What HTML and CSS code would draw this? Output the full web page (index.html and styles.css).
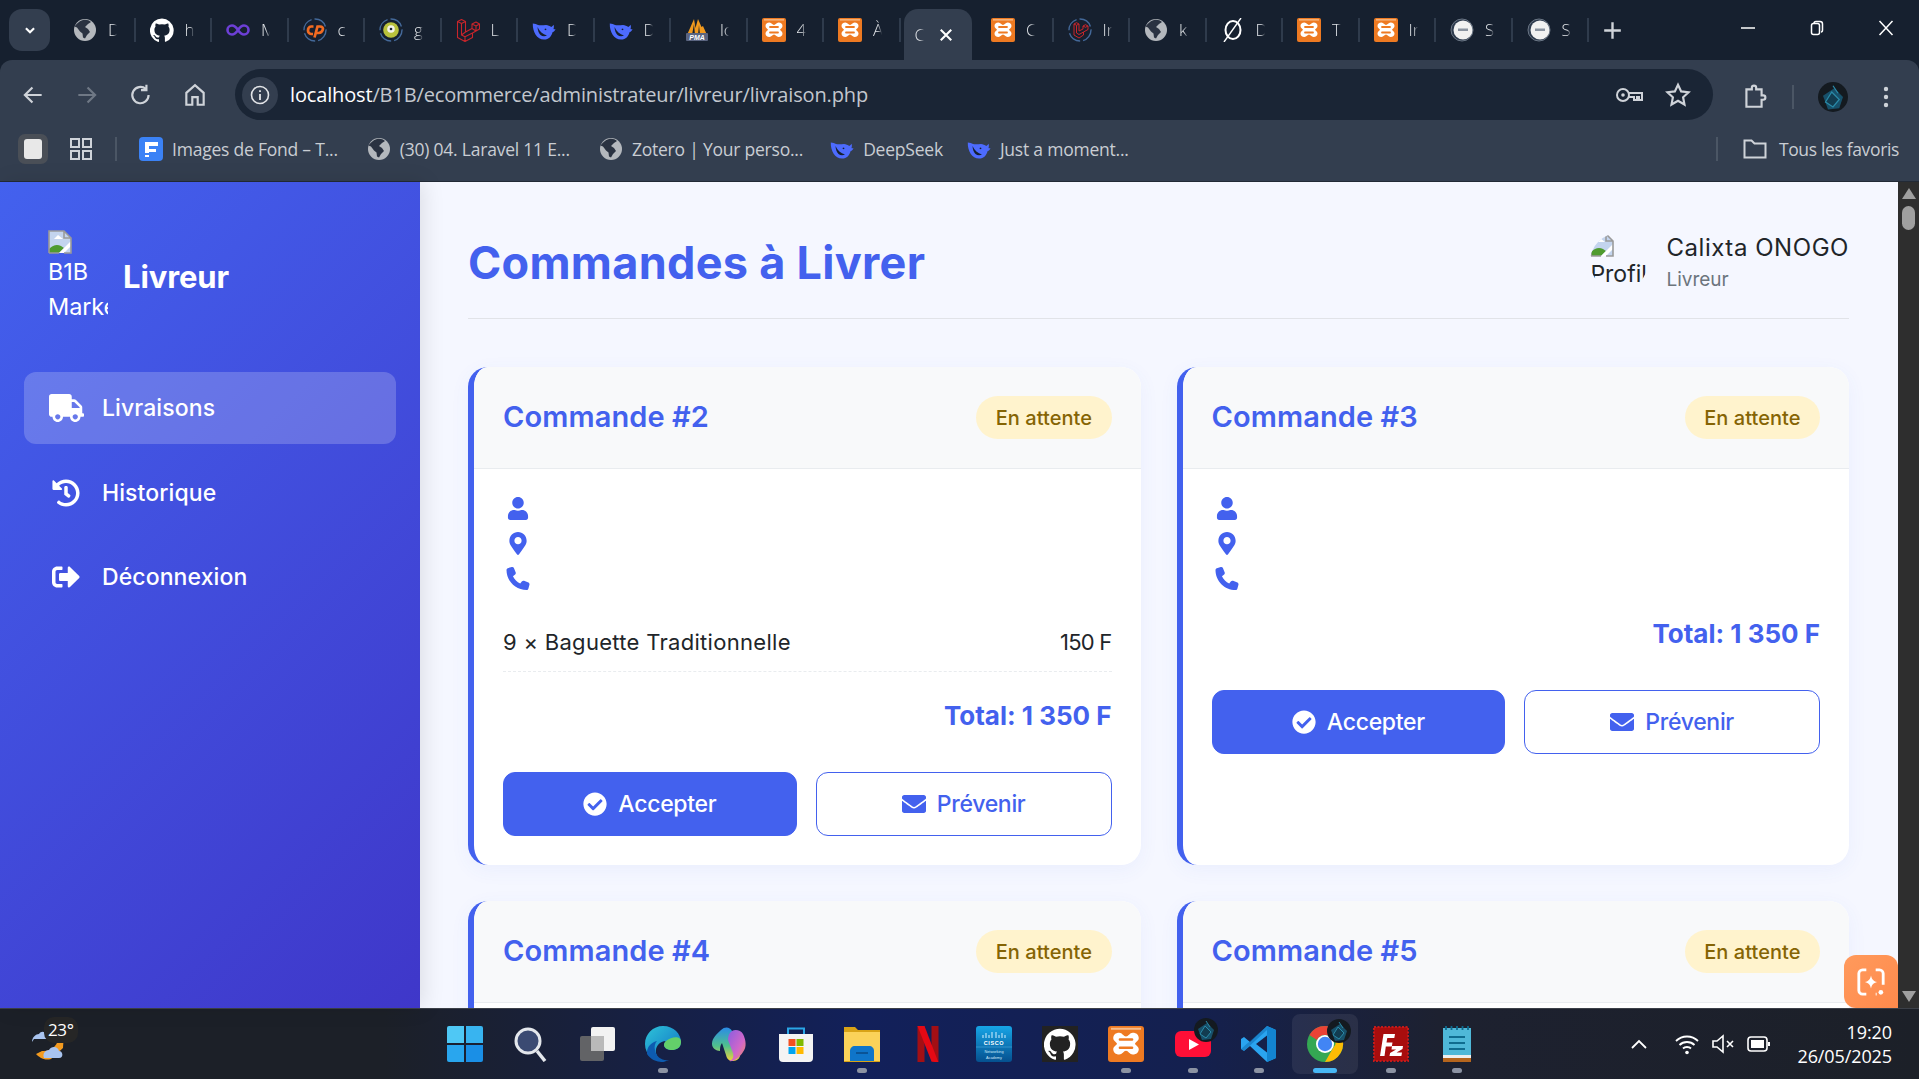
FILE: index.html
```html
<!DOCTYPE html>
<html lang="fr">
<head>
<meta charset="utf-8">
<title>Commandes à Livrer</title>
<link rel="stylesheet" href="styles.css">
</head>
<body>
<svg class="defs" aria-hidden="true">
  <defs>
    <linearGradient id="copA" x1="0" y1="0" x2="0" y2="1"><stop offset="0" stop-color="#2a8be8"/><stop offset=".55" stop-color="#4fc08d"/><stop offset="1" stop-color="#f2d23c"/></linearGradient>
    <linearGradient id="copB" x1="0" y1="0" x2="1" y2="1"><stop offset="0" stop-color="#8a5ee0"/><stop offset=".6" stop-color="#d167c9"/><stop offset="1" stop-color="#f0915a"/></linearGradient>
    <linearGradient id="ciscoG" x1="0" y1="0" x2="0" y2="1"><stop offset="0" stop-color="#17a5e6"/><stop offset="1" stop-color="#05508f"/></linearGradient>
    <linearGradient id="edgeG" x1="0" y1="0" x2="1" y2="1"><stop offset="0" stop-color="#2ec4d8"/><stop offset="1" stop-color="#0f6cc4"/></linearGradient>
  </defs>
  <symbol id="truck" viewBox="0 0 640 512"><path fill="currentColor" d="M624 352h-16V243.9c0-12.7-5.1-24.9-14.1-33.9L494 110.1c-9-9-21.2-14.1-33.9-14.1H416V48c0-26.5-21.5-48-48-48H48C21.5 0 0 21.5 0 48v320c0 26.5 21.5 48 48 48h16c0 53 43 96 96 96s96-43 96-96h128c0 53 43 96 96 96s96-43 96-96h48c8.8 0 16-7.2 16-16v-32c0-8.8-7.2-16-16-16zM160 464c-26.5 0-48-21.5-48-48s21.5-48 48-48 48 21.5 48 48-21.5 48-48 48zm320 0c-26.5 0-48-21.5-48-48s21.5-48 48-48 48 21.5 48 48-21.5 48-48 48zm80-208H416V144h44.1l99.9 99.9V256z"/></symbol>
  <symbol id="history" viewBox="0 0 512 512"><path fill="currentColor" d="M504 255.531c.253 136.64-111.18 248.372-247.82 248.468-59.015.042-113.223-20.53-155.822-54.911-11.077-8.94-11.905-25.541-1.839-35.607l11.267-11.267c8.609-8.609 22.353-9.551 31.891-1.984C173.062 425.135 212.781 440 256 440c101.705 0 184-82.311 184-184 0-101.705-82.311-184-184-184-48.814 0-93.149 18.969-126.068 49.932l50.754 50.754c10.08 10.08 2.941 27.314-11.313 27.314H24c-8.837 0-16-7.163-16-16V38.627c0-14.254 17.234-21.393 27.314-11.314l49.372 49.372C129.209 34.136 189.552 8 256 8c136.81 0 247.747 110.78 248 247.531zm-180.912 78.784l9.823-12.63c8.138-10.463 6.253-25.542-4.21-33.679L288 256.349V152c0-13.255-10.745-24-24-24h-16c-13.255 0-24 10.745-24 24v135.651l65.409 50.874c10.463 8.137 25.541 6.253 33.679-4.21z"/></symbol>
  <symbol id="signout" viewBox="0 0 512 512"><path fill="currentColor" d="M497 273L329 441c-15 15-41 4.5-41-17v-96H152c-13.3 0-24-10.7-24-24v-96c0-13.3 10.7-24 24-24h136V88c0-21.4 25.9-32 41-17l168 168c9.3 9.4 9.3 24.6 0 34zM192 436v-40c0-6.6-5.4-12-12-12H96c-17.7 0-32-14.3-32-32V160c0-17.7 14.3-32 32-32h84c6.6 0 12-5.4 12-12V76c0-6.6-5.4-12-12-12H96c-53 0-96 43-96 96v192c0 53 43 96 96 96h84c6.6 0 12-5.4 12-12z"/></symbol>
  <symbol id="user" viewBox="0 0 448 512"><path fill="currentColor" d="M224 256c70.7 0 128-57.3 128-128S294.7 0 224 0 96 57.3 96 128s57.3 128 128 128zm89.6 32h-16.7c-22.2 10.2-46.9 16-72.9 16s-50.6-5.8-72.9-16h-16.7C60.2 288 0 348.2 0 422.4V464c0 26.5 21.5 48 48 48h352c26.5 0 48-21.5 48-48v-41.6c0-74.2-60.2-134.4-134.4-134.4z"/></symbol>
  <symbol id="pin" viewBox="0 0 384 512"><path fill="currentColor" d="M172.268 501.67C26.97 291.031 0 269.413 0 192 0 85.961 85.961 0 192 0s192 85.961 192 192c0 77.413-26.97 99.031-172.268 309.67-9.535 13.774-29.93 13.773-39.464 0zM192 272c44.183 0 80-35.817 80-80s-35.817-80-80-80-80 35.817-80 80 35.817 80 80 80z"/></symbol>
  <symbol id="phone" viewBox="0 0 512 512"><path fill="currentColor" d="M164.9 24.6c-7.7-18.6-28-28.5-47.4-23.2l-88 24C12.1 30.2 0 46 0 64C0 311.4 200.6 512 448 512c18 0 33.8-12.1 38.6-29.5l24-88c5.3-19.4-4.6-39.7-23.2-47.4l-96-40c-16.3-6.8-35.2-2.1-46.3 11.6L304.7 368C234.3 334.7 177.3 277.7 144 207.3L193.3 167c13.7-11.2 18.4-30 11.6-46.3l-40-96z"/></symbol>
  <symbol id="check" viewBox="0 0 512 512"><path fill="currentColor" d="M504 256c0 136.967-111.033 248-248 248S8 392.967 8 256 119.033 8 256 8s248 111.033 248 248zM227.314 387.314l184-184c6.248-6.248 6.248-16.379 0-22.627l-22.627-22.627c-6.248-6.249-16.379-6.249-22.628 0L216 308.118l-70.059-70.059c-6.248-6.248-16.379-6.248-22.628 0l-22.627 22.627c-6.248 6.248-6.248 16.379 0 22.627l104 104c6.249 6.249 16.379 6.249 22.628.001z"/></symbol>
  <symbol id="envelope" viewBox="0 0 512 512"><path fill="currentColor" d="M502.3 190.8c3.9-3.1 9.7-.2 9.7 4.7V400c0 26.5-21.5 48-48 48H48c-26.5 0-48-21.5-48-48V195.6c0-5 5.7-7.8 9.7-4.7 22.4 17.4 52.1 39.5 154.1 113.6 21.1 15.4 56.7 47.8 92.2 47.6 35.7.3 72-32.8 92.3-47.6 102-74.1 131.6-96.3 154-113.7zM256 320c23.2.4 56.6-29.2 73.4-41.4 132.7-96.3 142.8-104.7 173.4-128.7 5.8-4.5 9.2-11.5 9.2-18.9v-19c0-26.5-21.5-48-48-48H48C21.5 64 0 85.5 0 112v19c0 7.4 3.4 14.3 9.2 18.9 30.6 23.9 40.7 32.4 173.4 128.7 16.8 12.2 50.2 41.8 73.4 41.4z"/></symbol>
  <symbol id="broken" viewBox="0 0 24 24"><path fill="#c3d4ee" d="M1 1h15l7 7v15H1z"/><path fill="#fff" d="M6 9l4-4 5 4z"/><path fill="#4f9b2f" d="M1 23v-4c4-4 8-5 12-3l3 2-5 5z"/><path fill="#fff" d="M11 23l12-12v5l-7 7z"/><path fill="none" stroke="#9a9a9a" stroke-width="1.6" d="M1 23V1h15l7 7v15H16M23 8h-7V1M1 23h10"/></symbol>
  <symbol id="globe" viewBox="0 0 24 24"><circle cx="12" cy="12" r="11" fill="#b4b8bd"/><path fill="#1b2433" d="M10 2c3-.5 6 0 8 2l-3 2-3 3 3 2 2 3-3 3-2 3.500-2-1-.5-4-2.500-2-3-4-2.500-1C3.500 6 6 3 10 2z" fill-opacity=".9"/></symbol>
  <symbol id="github" viewBox="0 0 24 24"><path fill="#fff" d="M12 .5a12 12 0 0 0-3.800 23.400c.6.1.8-.3.8-.6v-2.100c-3.300.7-4-1.600-4-1.600-.5-1.400-1.300-1.800-1.300-1.800-1.100-.7.1-.7.1-.7 1.200.1 1.800 1.200 1.800 1.200 1.100 1.800 2.800 1.300 3.500 1 .1-.8.400-1.300.8-1.600-2.700-.3-5.500-1.300-5.500-5.900 0-1.300.5-2.400 1.200-3.200-.1-.3-.5-1.500.1-3.200 0 0 1-.3 3.300 1.200a11.500 11.500 0 0 1 6 0c2.300-1.500 3.300-1.200 3.300-1.200.6 1.700.2 2.900.1 3.200.8.8 1.200 1.900 1.200 3.200 0 4.600-2.800 5.600-5.500 5.900.4.400.8 1.100.8 2.200v3.300c0 .3.2.7.8.6A12 12 0 0 0 12 .5z"/></symbol>
  <symbol id="infinity" viewBox="0 0 24 24"><path fill="none" stroke="#6d3fd6" stroke-width="2.600" d="M12 12c-2-3-4-4.500-6-4.500a4.500 4.500 0 0 0 0 9c2 0 4-1.500 6-4.500s4-4.500 6-4.500a4.500 4.500 0 0 1 0 9c-2 0-4-1.500-6-4.500z"/></symbol>
  <symbol id="cpanel" viewBox="0 0 24 24"><circle cx="12" cy="12" r="11" fill="none" stroke="#44699a" stroke-width="1.400" stroke-dasharray="14 3"/><path fill="none" stroke="#f26b21" stroke-width="2.700" d="M10.500 8.500H8C5.800 8.500 5 11 5 12.500S6 16 8 16h2M11.500 19.500L14.500 8.500H17c2.500 0 3.300 1.500 2.800 3.200S17.800 15 15.500 15H13.500"/></symbol>
  <symbol id="target" viewBox="0 0 24 24"><circle cx="12" cy="12" r="11" fill="none" stroke="#44699a" stroke-width="1.400" stroke-dasharray="14 3"/><circle cx="12" cy="12" r="7.800" fill="#b9c23c"/><circle cx="12" cy="11" r="3.800" fill="#f4f4e8"/><circle cx="12" cy="11" r="1.300" fill="#1b2433"/></symbol>
  <symbol id="laravel" viewBox="0 0 24 24"><path fill="none" stroke="#c9252b" stroke-width="1.100" stroke-linejoin="round" d="M1.500 3.500L5.500 1.500 9.500 3.500V14L16 10.500V6L20 4l3.500 2V11l-7 4v4.500L9 23.500 1.500 19.500zM1.500 3.500L5.500 5.500 9.500 3.500M5.500 5.500V17L9 18.800 16.500 15M16 6l4 2 3.500-2M20 8v5M9.500 14L5.500 17M9 18.800v4.700M16 10.500l4 2.500"/></symbol>
  <symbol id="lcircle" viewBox="0 0 24 24"><circle cx="12" cy="12" r="11" fill="none" stroke="#44699a" stroke-width="1.400" stroke-dasharray="14 3"/><path fill="none" stroke="#c9252b" stroke-width="1" stroke-linejoin="round" d="M6 6l2.500-1.300L11 6v7l4-2V8l2.500-1.300L20 8v3.500l-4.500 2.500v3L11 20l-5-3zM6 6l2.500 1.300L11 6M8.500 7.300V15L11 16.500l4.500-2.500M15 8l2.500 1.300L20 8"/></symbol>
  <symbol id="deepseek" viewBox="0 0 24 24"><path fill="#4d6bfe" d="M.8 5.500C.5 14 5 21.500 12 21.500c5 0 7.500-3.200 8.500-7.300 1.500-.5 2.600-1.700 3-3.200-.8.300-1.500.3-2 0 .5-1.500.5-3 0-4.200-.5 1-1.200 1.700-2.200 2.200-1.500-1-3.300-2-5.300-2-3.500 0-7.500 1-10.200-1z"/><path fill="#16202f" d="M5.500 9c2 4.500 5.200 7.200 9.500 8.500-2.300 1.200-4.600 1-6.500-.5C6.800 15.500 5.700 12.500 5.500 9zM13 10.500l1.500.5-.5 1.300-1.500-.6z"/></symbol>
  <symbol id="pma" viewBox="0 0 24 24"><path fill="#f29a1e" d="M2 17L9 1l1.500 9L13 1l3.500 8 1.500-1 4 9z"/><path fill="#16202f" d="M9 6l1 11H7zM14 7l1 10h-2z"/><rect x="1" y="15" width="22" height="8" rx="1" fill="#5a6480"/><text class="pma-text" x="12" y="21.700">PMA</text></symbol>
  <symbol id="xampp" viewBox="0 0 24 24"><rect width="24" height="24" rx="2" fill="#ee7a22"/><rect x="2" y="1.200" width="20" height="1.300" fill="#f7bd8b"/><path fill="#fff" d="M7.500 4.500C9.500 4.500 10.500 7 12 7S14.500 4.500 16.500 4.500C19 4.500 20.500 6 20.500 8C20.500 10 18.500 10.500 18 11.750C18.500 13 20.500 13.500 20.500 15.500C20.500 17.500 19 19 16.500 19C14.500 19 13.500 16.500 12 16.500S9.500 19 7.500 19C5 19 3.500 17.500 3.500 15.500C3.500 13.500 5.500 13 6 11.750C5.500 10.500 3.500 10 3.500 8C3.500 6 5 4.500 7.500 4.500z"/><path fill="#ee7a22" d="M8 8.100h8a.9.9 0 0 1 0 1.800H8a.9.9 0 0 1 0-1.800zM8 13.600h8a.9.9 0 0 1 0 1.800H8a.9.9 0 0 1 0-1.800z"/></symbol>
  <symbol id="slash" viewBox="0 0 24 24"><ellipse cx="12" cy="12" rx="7.500" ry="9" fill="none" stroke="#fff" stroke-width="2"/><path stroke="#fff" stroke-width="1.400" d="M3 24L20 0"/></symbol>
  <symbol id="sup" viewBox="0 0 24 24"><circle cx="12" cy="12" r="11" fill="#2d3a4d" stroke="#6b7685"/><circle cx="13" cy="12" r="9.500" fill="#f1f1f1"/><rect x="8" y="10.500" width="10" height="2.500" fill="#8a93a0"/></symbol>
  <symbol id="mini" viewBox="0 0 24 24"><circle cx="12" cy="12" r="12" fill="#141a20"/><path d="M4 11l9-6 7 7-3 9-9 1z" fill="#17506a"/><path d="M6 16l5-8 6 6-5 6zM12 3l4 6" stroke="#2a8aa8" stroke-width="1" fill="#123c50"/></symbol>
</svg>

<div class="window">
  <header class="browser">
    <div class="tabstrip">
      <button class="tablist"><svg class="ico-sm" viewBox="0 0 12 12"><path d="M2.500 4.500L6 8l3.500-3.500" fill="none" stroke="#fff" stroke-width="1.800"/></svg></button>
      <div class="tab"><svg class="fav"><use href="#globe"/></svg><span class="tt">D</span></div>
      <div class="tab"><svg class="fav"><use href="#github"/></svg><span class="tt">h</span></div>
      <div class="tab"><svg class="fav"><use href="#infinity"/></svg><span class="tt">M</span></div>
      <div class="tab"><svg class="fav"><use href="#cpanel"/></svg><span class="tt">c</span></div>
      <div class="tab"><svg class="fav"><use href="#target"/></svg><span class="tt">g</span></div>
      <div class="tab"><svg class="fav"><use href="#laravel"/></svg><span class="tt">L</span></div>
      <div class="tab"><svg class="fav"><use href="#deepseek"/></svg><span class="tt">D</span></div>
      <div class="tab"><svg class="fav"><use href="#deepseek"/></svg><span class="tt">D</span></div>
      <div class="tab"><svg class="fav"><use href="#pma"/></svg><span class="tt">lo</span></div>
      <div class="tab"><svg class="fav"><use href="#xampp"/></svg><span class="tt">4</span></div>
      <div class="tab"><svg class="fav"><use href="#xampp"/></svg><span class="tt">À</span></div>
      <div class="tab tab-active"><span class="tt">C</span><svg class="tab-close" viewBox="0 0 12 12"><path d="M1.500 1.500l9 9m0-9l-9 9" stroke="#fff" stroke-width="1.800"/></svg></div>
      <div class="tab"><svg class="fav"><use href="#xampp"/></svg><span class="tt">C</span></div>
      <div class="tab"><svg class="fav"><use href="#lcircle"/></svg><span class="tt">In</span></div>
      <div class="tab"><svg class="fav"><use href="#globe"/></svg><span class="tt">k</span></div>
      <div class="tab"><svg class="fav"><use href="#slash"/></svg><span class="tt">D</span></div>
      <div class="tab"><svg class="fav"><use href="#xampp"/></svg><span class="tt">T</span></div>
      <div class="tab"><svg class="fav"><use href="#xampp"/></svg><span class="tt">In</span></div>
      <div class="tab"><svg class="fav"><use href="#sup"/></svg><span class="tt">S</span></div>
      <div class="tab"><svg class="fav"><use href="#sup"/></svg><span class="tt">S</span></div>
      <svg class="newtab" viewBox="0 0 16 16"><path d="M8 1v14M1 8h14" stroke="#cfd3d9" stroke-width="2"/></svg>
      <div class="winctl">
        <svg viewBox="0 0 16 16"><path d="M1 8h14" stroke="#fff" stroke-width="1.500"/></svg>
        <svg viewBox="0 0 16 16"><path d="M5 3.500c0-1 .5-2 2-2h4c1.500 0 2.500 1 2.500 2.500v6c0 1.500-.5 2-1.500 2" fill="none" stroke="#fff" stroke-width="1.500"/><rect x="2.500" y="3.500" width="8" height="11" rx="2" fill="none" stroke="#fff" stroke-width="1.500"/></svg>
        <svg viewBox="0 0 16 16"><path d="M1.500 1l13 14m0-14l-13 14" stroke="#fff" stroke-width="1.500"/></svg>
      </div>
    </div>
    <div class="toolbar">
      <div class="navrow">
        <svg class="tb" viewBox="0 0 24 24"><path d="M20 12H5m6.500-7L4.500 12l7 7" fill="none" stroke="#cfd3d9" stroke-width="2"/></svg>
        <svg class="tb" viewBox="0 0 24 24"><path d="M4 12h15m-6.500-7l7 7-7 7" fill="none" stroke="#6f7885" stroke-width="2"/></svg>
        <svg class="tb" viewBox="0 0 24 24"><path d="M19 12a7.500 7.500 0 1 1-2.500-5.500M17 2.500v5h-5" fill="none" stroke="#cfd3d9" stroke-width="2"/></svg>
        <svg class="tb" viewBox="0 0 24 24"><path d="M4 21V10l8-7 8 7v11h-5.500v-7h-5v7z" fill="none" stroke="#cfd3d9" stroke-width="2"/></svg>
      </div>
      <div class="omnibox">
        <span class="infobtn"><svg viewBox="0 0 20 20"><circle cx="10" cy="10" r="8.500" fill="none" stroke="#e3e5e8" stroke-width="1.600"/><path d="M10 9v6M10 5.200v1.800" stroke="#e3e5e8" stroke-width="1.800"/></svg></span>
        <span class="url"><b>localhost</b>/B1B/ecommerce/administrateur/livreur/livraison.php</span>
        <svg class="omni-ico key" viewBox="0 0 28 20"><circle cx="8" cy="10" r="6" fill="none" stroke="#cfd3d9" stroke-width="2"/><circle cx="8" cy="10" r="1.800" fill="#cfd3d9"/><path d="M14 8h13v7h-3v-3h-2v3h-3v-3h-5" fill="none" stroke="#cfd3d9" stroke-width="2"/></svg>
        <svg class="omni-ico" viewBox="0 0 24 24"><path d="M12 2.500l2.900 6.200 6.800.8-5 4.600 1.300 6.700-6-3.400-6 3.400 1.300-6.700-5-4.600 6.800-.8z" fill="none" stroke="#cfd3d9" stroke-width="2"/></svg>
      </div>
      <div class="tool-right">
        <svg class="tb" viewBox="0 0 24 24"><path d="M5 5h5V3.500a2 2 0 0 1 4 0V5h5v5.500h1.500a2 2 0 0 1 0 4H19V21H5z" fill="none" stroke="#cfd3d9" stroke-width="2"/></svg>
        <span class="vsep"></span>
        <svg class="avatar"><use href="#mini"/></svg>
        <svg class="dots" viewBox="0 0 6 24"><circle cx="3" cy="4" r="2.200" fill="#cfd3d9"/><circle cx="3" cy="12" r="2.200" fill="#cfd3d9"/><circle cx="3" cy="20" r="2.200" fill="#cfd3d9"/></svg>
      </div>
    </div>
    <nav class="bookmarks">
      <span class="bm-square"><i></i></span>
      <svg class="bm-grid" viewBox="0 0 22 22"><path d="M1 1h8v8H1zM13 1h8v8h-8zM1 13h8v8H1zM13 13h8v8h-8z" fill="none" stroke="#cfd3d9" stroke-width="2"/></svg>
      <span class="vsep bm-sep"></span>
      <span class="bm bm-first"><svg class="bm-fav" viewBox="0 0 24 24"><rect width="24" height="24" rx="4" fill="#3b82f6"/><path d="M6 5h13v4H10v3h7v3h-7v1H6zM6 18h4v2H6z" fill="#fff"/></svg>Images de Fond – T...</span>
      <span class="bm"><svg class="bm-fav"><use href="#globe"/></svg>(30) 04. Laravel 11 E...</span>
      <span class="bm"><svg class="bm-fav"><use href="#globe"/></svg>Zotero | Your perso...</span>
      <span class="bm bm-ds"><svg class="bm-fav"><use href="#deepseek"/></svg>DeepSeek</span>
      <span class="bm bm-jm"><svg class="bm-fav"><use href="#deepseek"/></svg>Just a moment...</span>
      <span class="bm-all"><span class="vsep"></span><svg class="bm-folder" viewBox="0 0 24 20"><path d="M1.500 18.500V1.500h7l3 3h11v14z" fill="none" stroke="#cfd3d9" stroke-width="2"/></svg>Tous les favoris</span>
    </nav>
  </header>

  <div class="page">
    <aside class="sidebar">
      <div class="brand">
        <div class="logo"><svg class="broken"><use href="#broken"/></svg>B1B Marketplace</div>
        <h2 class="brand-name">Livreur</h2>
      </div>
      <ul class="nav">
        <li class="nav-item is-active"><span class="nav-ico"><svg class="ico-truck"><use href="#truck"/></svg></span>Livraisons</li>
        <li class="nav-item"><span class="nav-ico"><svg class="ico-nav"><use href="#history"/></svg></span>Historique</li>
        <li class="nav-item"><span class="nav-ico"><svg class="ico-nav"><use href="#signout"/></svg></span>Déconnexion</li>
      </ul>
    </aside>

    <main class="main">
      <div class="topbar">
        <h1 class="title">Commandes à Livrer</h1>
        <div class="profile">
          <div class="avatar-img"><svg class="broken"><use href="#broken"/></svg>Profil</div>
          <div class="profile-text">
            <div class="profile-name">Calixta ONOGO</div>
            <div class="profile-role">Livreur</div>
          </div>
        </div>
      </div>

      <section class="grid">
        <article class="card">
          <div class="card-head"><h3 class="card-title">Commande #2</h3><span class="badge">En attente</span></div>
          <div class="card-body">
            <div class="info">
              <div class="info-row"><svg class="ico-info"><use href="#user"/></svg></div>
              <div class="info-row"><svg class="ico-info"><use href="#pin"/></svg></div>
              <div class="info-row"><svg class="ico-info"><use href="#phone"/></svg></div>
            </div>
            <div class="items">
              <div class="item"><span>9 × Baguette Traditionnelle</span><span class="price">150 F</span></div>
            </div>
            <div class="total">Total: 1 350 F</div>
            <div class="actions">
              <button class="btn btn-primary"><svg class="ico-btn"><use href="#check"/></svg>Accepter</button>
              <button class="btn btn-outline"><svg class="ico-btn"><use href="#envelope"/></svg>Prévenir</button>
            </div>
          </div>
        </article>
        <article class="card">
          <div class="card-head"><h3 class="card-title">Commande #3</h3><span class="badge">En attente</span></div>
          <div class="card-body">
            <div class="info">
              <div class="info-row"><svg class="ico-info"><use href="#user"/></svg></div>
              <div class="info-row"><svg class="ico-info"><use href="#pin"/></svg></div>
              <div class="info-row"><svg class="ico-info"><use href="#phone"/></svg></div>
            </div>
            <div class="total">Total: 1 350 F</div>
            <div class="actions">
              <button class="btn btn-primary"><svg class="ico-btn"><use href="#check"/></svg>Accepter</button>
              <button class="btn btn-outline"><svg class="ico-btn"><use href="#envelope"/></svg>Prévenir</button>
            </div>
          </div>
        </article>
        <article class="card">
          <div class="card-head"><h3 class="card-title">Commande #4</h3><span class="badge">En attente</span></div>
          <div class="card-body"></div>
        </article>
        <article class="card">
          <div class="card-head"><h3 class="card-title">Commande #5</h3><span class="badge">En attente</span></div>
          <div class="card-body"></div>
        </article>
      </section>
      <div class="scan-btn"><svg viewBox="0 0 32 32"><path d="M11 3H7a4 4 0 0 0-4 4v18a4 4 0 0 0 4 4h4M21 3h4a4 4 0 0 1 4 4v12M21 29h1" fill="none" stroke="#fff" stroke-width="3"/><circle cx="26.500" cy="27" r="2.500" fill="#fff"/><path d="M16 9c.8 4 2.500 6 6.500 7-4 1-5.700 3-6.500 7-.8-4-2.500-6-6.500-7 4-1 5.700-3 6.500-7z" fill="#fff"/></svg></div>
    </main>

    <div class="scrollbar">
      <span class="arrow-up"></span>
      <span class="thumb"></span>
      <span class="arrow-down"></span>
    </div>
  </div>

  <footer class="taskbar">
    <div class="weather">
      <svg class="weather-ico" viewBox="0 0 40 44"><path d="M2 20c0-5 4-8 7-8 2-3 6-3 7 1 2 0 3 2 3 4H4z" fill="#a9c4ef"/><path d="M6 32c3 3 8 7 15 5l12-11c0-3 1-8 0-11l-5 0c1 7-6 15-16 14z" fill="#f39a1f"/><path d="M14 36c-2-5 2-8 5-8 2-4 9-4 10 1 4 0 5 7 0 7z" fill="#a9c4ef"/></svg>
      <span class="temp">23°</span>
    </div>
    <div class="apps">
      <span class="app"><svg viewBox="0 0 36 36"><path d="M0 2a2 2 0 0 1 2-2h15v17H0z" fill="#4fc8f5"/><path d="M19 0h15a2 2 0 0 1 2 2v15H19z" fill="#38b4f0"/><path d="M0 19h17v17H2a2 2 0 0 1-2-2z" fill="#29a6ee"/><path d="M19 19h17v15a2 2 0 0 1-2 2H19z" fill="#1a8fe6"/></svg></span>
      <span class="app"><svg viewBox="0 0 36 36"><circle cx="15" cy="15" r="12" fill="#3b4a72" stroke="#e4e7ec" stroke-width="3"/><path d="M24 25l8 10" stroke="#e4e7ec" stroke-width="3.500"/></svg></span>
      <span class="app"><svg viewBox="0 0 36 36"><rect x="12" y="1" width="24" height="24" rx="2" fill="#f2f2f2"/><rect x="1" y="10" width="24" height="25" rx="2" fill="#6a6a6a" fill-opacity=".9"/><rect x="12" y="10" width="13" height="15" fill="#b9b9b9"/></svg></span>
      <span class="app dot"><svg viewBox="0 0 36 36"><path d="M18 0c11 0 18 8 18 16 0 6-5 8-9 8s-8-2-8-5c0-2 1-3 2-4-6 0-11 5-10 12 1 5 5 9 11 9C9 36 0 29 0 18 0 8 8 0 18 0z" fill="url(#edgeG)"/><path d="M36 16c0 6-5 8-9 8s-8-2-8-5c0-2 1-3 2-4 5-4 15-6 15 1z" fill="#63d06a"/><path d="M2 28c3 5 9 8 16 8l6-2c-7 1-13-3-14-10-1-3 0-7 2-9-5 1-11 6-10 13z" fill="#0d5bb0"/></svg></span>
      <span class="app"><svg viewBox="0 0 36 36"><path d="M10 4c4-4 9-3 11 1l8 22c1 5-3 8-7 8-4 0-6-2-7-6L11 17c-2 3-2 5-2 8-4 0-8-3-8-7 0-6 5-10 9-14z" fill="url(#copA)"/><path d="M21 5c3-2 9-1 11 3 3 6 4 13 0 18-3 5-9 10-14 9 4-1 5-4 4-8L17 14c0-4 1-7 4-9z" fill="url(#copB)"/></svg></span>
      <span class="app"><svg viewBox="0 0 36 36"><path d="M10 9V2.500h16V9" fill="none" stroke="#2aa6e6" stroke-width="2"/><path d="M1 8h34v24a4 4 0 0 1-4 4H5a4 4 0 0 1-4-4z" fill="#f4f4f4"/><path d="M10.500 13h7v7h-7z" fill="#f25022"/><path d="M18.500 13h7v7h-7z" fill="#7fba00"/><path d="M10.500 21h7v7h-7z" fill="#00a4ef"/><path d="M18.500 21h7v7h-7z" fill="#ffb900"/></svg></span>
      <span class="app dot"><svg viewBox="0 0 36 36"><path d="M0 1h11l3 3h22v32H0z" fill="#d9a316"/><path d="M0 6h36v29H0z" fill="#fbd259"/><path d="M6 25c0-3 2-5 5-5h14c3 0 5 2 5 5v10H6z" fill="#0f75c9"/><path d="M12 27h12" stroke="#0a4a85" stroke-width="1.500"/></svg></span>
      <span class="app"><svg viewBox="0 0 36 36"><path d="M7.500 0h7v36l-7 .5z" fill="#a30f14"/><path d="M21.500 0h7v36.500l-7-1z" fill="#a30f14"/><path d="M7.500 0h7l14 36.500-7-1z" fill="#e50914"/></svg></span>
      <span class="app"><svg viewBox="0 0 36 36"><rect width="36" height="36" rx="3" fill="url(#ciscoG)"/><path d="M0 21h36" stroke="#4aa8dc" stroke-width=".6"/><path d="M7 9v3m3-5v5m3-3v3m3-6v6m4-6v6m3-3v3m3-5v5m3-3v3" stroke="#d4f0ff" stroke-width="1"/><text class="cisco-t" x="18" y="18.500">CISCO</text><text class="cisco-s" x="18" y="27">Networking</text><text class="cisco-s" x="18" y="32.500">Academy</text></svg></span>
      <span class="app"><svg viewBox="0 0 36 36"><rect width="36" height="36" fill="#222"/><use href="#github" x="2" y="2" width="32" height="32"/></svg></span>
      <span class="app dot"><svg viewBox="0 0 36 36"><use href="#xampp" width="36" height="36"/></svg></span>
      <span class="app dot"><svg class="over" viewBox="0 0 36 36"><rect y="5" width="36" height="26" rx="6" fill="#ff0f37"/><path d="M14 13l10 5.500-10 5.500z" fill="#fff"/><use href="#mini" x="19" y="-8" width="24" height="24"/></svg></span>
      <span class="app dot"><svg viewBox="0 0 36 36"><path d="M26 0l9 4v28l-9 4L9 20l-6 5-3-2V13l3-2 6 5z" fill="#2aa4f0"/><path d="M26 9.500v17l-11-8.500z" fill="#15204a"/><path d="M26 0l9 4v28l-9 4V0z" fill="#1384d0"/><path d="M0 23l3 2 23-21V0z" fill="#0f6db5" fill-opacity=".55"/></svg></span>
      <span class="app app-active"><svg class="over" viewBox="0 0 36 36"><circle cx="18" cy="18" r="18" fill="#34a853"/><path d="M18 0a18 18 0 0 1 15.600 9H18a9 9 0 0 0-8 5L2.400 9A18 18 0 0 1 18 0z" fill="#ea4335"/><path d="M33.600 9A18 18 0 0 1 18 36l7.800-13.500a9 9 0 0 0 0-13.500z" fill="#fbbc05"/><circle cx="18" cy="18" r="9" fill="#fff"/><circle cx="18" cy="18" r="7.200" fill="#4285f4"/><use href="#mini" x="20" y="-7" width="24" height="24"/></svg></span>
      <span class="app dot"><svg viewBox="0 0 36 36"><rect x="1" y="1" width="34" height="34" fill="#a80d0d" stroke="#c41a1a" stroke-width="2" stroke-dasharray="2 1.500"/><path d="M7 30L10.500 8H22l-.7 4h-7l-.8 4.500h6l-.7 4h-6L11.500 30z" fill="#fff"/><path d="M19 20h11l-.5 3-6 3.500H29l-.6 3.500H16.500l.6-3 6-3.500H18.500z" fill="#fff"/></svg></span>
      <span class="app dot"><svg viewBox="0 0 36 36"><rect x="4" y="2" width="28" height="28" fill="#4fb8d8"/><rect x="4" y="31" width="28" height="5" fill="#b5651d"/><path d="M4 29h28v3H4z" fill="#eee"/><path d="M10 11h16M10 17h16M10 23h16" stroke="#0f6c8f" stroke-width="2"/><path d="M7 0v4m5.500-4v4M18 0v4m5.500-4v4M29 0v4" stroke="#0f6c8f" stroke-width="1.800"/></svg></span>
    </div>
    <div class="tray">
      <svg class="tray-ico" viewBox="0 0 20 20"><path d="M3 14l7-7 7 7" fill="none" stroke="#fff" stroke-width="1.800"/></svg>
      <svg class="tray-ico wide" viewBox="0 0 24 24"><path d="M1 9c6-6 16-6 22 0M4.500 13c4-4 11-4 15 0M8 16.500c2-2 6-2 8 0" fill="none" stroke="#fff" stroke-width="1.800"/><circle cx="12" cy="20.500" r="1.800" fill="#fff"/></svg>
      <svg class="tray-ico wide" viewBox="0 0 24 24"><path d="M2 9v6h4l6 5V4L6 9z" fill="none" stroke="#fff" stroke-width="1.600"/><path d="M16 9l6 6m0-6l-6 6" stroke="#fff" stroke-width="1.600"/></svg>
      <svg class="tray-ico wide" viewBox="0 0 24 24"><rect x="1" y="5" width="19" height="14" rx="3" fill="none" stroke="#fff" stroke-width="1.600"/><rect x="4" y="8" width="13" height="8" fill="#fff"/><rect x="21" y="10" width="2" height="4" fill="#fff"/></svg>
      <div class="clock"><span>19:20</span><span>26/05/2025</span></div>
    </div>
  </footer>
</div>
</body>
</html>
```

FILE: styles.css
```css
* { box-sizing: border-box; margin: 0; padding: 0; }
html, body { width: 100%; height: 100%; overflow: hidden; }
body { font-family: Inter, "Noto Sans", sans-serif; background: #16202f; color: #212529; }
.defs { position: absolute; width: 0; height: 0; }
.pma-text { font: italic 700 7px "Liberation Sans", sans-serif; fill: #fff; text-anchor: middle; }
.cisco-t { font: 700 5.500px "Liberation Sans", sans-serif; fill: #fff; text-anchor: middle; letter-spacing: .6px; }
.cisco-s { font: 400 3.800px "Liberation Sans", sans-serif; fill: #cfeaf8; text-anchor: middle; }

.window { display: flex; flex-direction: column; height: 1079px; }

/* browser frame */
.browser { flex: 0 0 182px; background: #16202f; font-family: "Open Sans", "Noto Sans", sans-serif; display: flex; flex-direction: column; }
.tabstrip { height: 60px; display: flex; align-items: flex-start; padding: 9px 0 0 9px; position: relative; z-index: 1; }
.tablist { width: 41px; height: 42px; border: 0; border-radius: 13px; background: #333e4f; display: flex; align-items: center; justify-content: center; margin-right: 9px; }
.ico-sm { width: 14px; height: 14px; }
.tab { flex: 0 0 76.5px; height: 24px; margin-top: 9px; padding-left: 14px; display: flex; align-items: center; gap: 11px; border-right: 2px solid #2f3b4c; overflow: hidden; }
.fav { width: 24px; height: 24px; flex: none; }
.tt { font-size: 17px; font-weight: 300; color: #dfe2e6; width: 9px; overflow: hidden; white-space: nowrap; line-height: 24px; -webkit-mask-image: linear-gradient(90deg, #000 55%, transparent); mask-image: linear-gradient(90deg, #000 55%, transparent); }
.tab-active { flex: 0 0 68px; height: 51px; margin: 0 5.500px 0 3px; padding-left: 11px; background: #333e4f; border: 0; border-radius: 14px 14px 0 0; justify-content: flex-start; gap: 15px; }
.tab-close { width: 14px; height: 14px; flex: none; }
.newtab { width: 19px; height: 19px; margin: 12px 0 0 14px; }
.winctl { margin-left: auto; display: flex; padding: 10px 25px 0 0; gap: 53px; }
.winctl svg { width: 16px; height: 18px; }

.toolbar { height: 62px; background: #333e4f; border-radius: 12px 12px 0 0; display: flex; padding: 9px 0 0 20px; align-items: flex-start; }
.navrow { display: flex; gap: 28px; padding-top: 13px; width: 215px; flex: none; }
.tb { width: 26px; height: 26px; flex: none; }
.omnibox { flex: 0 0 1478px; height: 51px; background: #1a2535; border-radius: 26px; display: flex; align-items: center; padding: 0 22px 0 7px; color: #c2c7ce; font-size: 20px; }
.infobtn { width: 36px; height: 36px; border-radius: 50%; background: #333e4f; display: flex; align-items: center; justify-content: center; margin-right: 12px; flex: none; }
.infobtn svg { width: 20px; height: 20px; }
.url { white-space: nowrap; flex: 1; letter-spacing: -.15px; }
.url b { font-weight: 400; color: #fff; }
.omni-ico { width: 26px; height: 26px; margin-left: 22px; flex: none; }
.key { width: 28px; }
.tool-right { display: flex; align-items: center; padding: 13px 0 0 28px; }
.vsep { width: 2px; height: 24px; background: #4b5665; display: block; flex: none; }
.tool-right .vsep { margin: 0 24px 0 25px; }
.avatar { width: 30px; height: 30px; flex: none; }
.dots { width: 6px; height: 24px; margin-left: 35px; }

.bookmarks { height: 60px; background: #333e4f; display: flex; align-items: center; padding: 0 20px 5px 18px; color: #c9cdd3; font-size: 17.5px; border-bottom: 1px solid #222a36; }
.bm-square { width: 30px; height: 30px; background: #4a4f57; border-radius: 7px; display: flex; align-items: center; justify-content: center; flex: none; }
.bm-square i { width: 18px; height: 20px; background: #e8e8e8; border-radius: 3px; display: block; }
.bm-grid { width: 22px; height: 22px; margin-left: 22px; flex: none; }
.bm-sep { margin-left: 23px; }
.bm { display: flex; align-items: center; gap: 9px; white-space: nowrap; margin-left: 29px; letter-spacing: -.22px; }
.bm-first { margin-left: 22px; }
.bm-ds { margin-left: 27px; }
.bm-jm { margin-left: 24px; }
.bm-fav { width: 24px; height: 24px; flex: none; }
.bm-all { margin-left: auto; display: flex; align-items: center; white-space: nowrap; letter-spacing: -.35px; }
.bm-folder { width: 24px; height: 20px; margin: 0 12px 0 25px; }

/* page */
.page { flex: 1; display: flex; min-height: 0; }
.sidebar { flex: 0 0 420px; background: linear-gradient(135deg, #4361ee 0%, #3f37c9 100%); padding: 48px 24px 0; color: #fff; box-shadow: 4px 0 20px rgba(0, 0, 0, .1); position: relative; z-index: 1; }
.brand { display: flex; align-items: center; gap: 15px; padding-left: 24px; margin-bottom: 46px; }
.logo { width: 60px; height: 96px; overflow: hidden; font-size: 23.500px; line-height: 35px; flex: none; letter-spacing: -.1px; }
.broken { width: 24px; height: 24px; display: block; }
.brand-name { font-size: 31px; font-weight: 700; letter-spacing: -.1px; line-height: 36px; margin-top: -2px; }
.nav { list-style: none; }
.nav-item { height: 72px; margin-bottom: 12.5px; padding-left: 24px; border-radius: 12px; display: flex; align-items: center; font-size: 23px; font-weight: 500; letter-spacing: .1px; }
.is-active { background: rgba(255, 255, 255, .2); }
.nav-ico { width: 36px; margin-right: 18px; display: flex; justify-content: center; }
.ico-truck { width: 35px; height: 28px; }
.ico-nav { width: 28px; height: 28px; }

.main { flex: 1; min-width: 0; background: #f5f7ff; padding: 48px 49px 0 48px; overflow: hidden; position: relative; }
.topbar { height: 89px; border-bottom: 1px solid #e1e3e8; display: flex; justify-content: space-between; padding-bottom: 24px; margin-bottom: 48px; align-items: center; }
.title { font-size: 45px; font-weight: 700; color: #4361ee; letter-spacing: .3px; }
.profile { display: flex; align-items: center; gap: 18px; }
.avatar-img { width: 58px; height: 58px; border-radius: 50%; overflow: hidden; font-size: 23px; line-height: 35px; }
.profile-name { font-size: 24px; line-height: 36px; letter-spacing: .55px; }
.profile-role { font-size: 19px; line-height: 28px; color: #6c757d; }

.grid { display: grid; grid-template-columns: 1fr 1fr; gap: 36px 36px; }
.card { background: #fff; border-left: 6px solid #4361ee; border-radius: 20px; box-shadow: 0 5px 20px rgba(67, 97, 238, .06); overflow: hidden; }
.card-head { height: 102px; background: #f8f9fa; border-bottom: 1px solid #e9ecef; display: flex; justify-content: space-between; align-items: center; padding: 0 29px; }
.card-title { font-size: 29px; font-weight: 600; color: #4361ee; letter-spacing: .1px; margin-top: -2px; }
.badge { height: 43px; padding: 0 19.500px; border-radius: 22px; background: #fff3cd; color: #856404; font-size: 20px; font-weight: 500; display: flex; align-items: center; letter-spacing: .05px; }
.card-body { padding: 22px 29px 29px; }
.info { margin-bottom: 18px; }
.info-row { height: 35px; display: flex; align-items: center; }
.ico-info { width: 30px; height: 23px; color: #4361ee; }
.items { margin-bottom: 24px; }
.item { display: flex; justify-content: space-between; padding: 12px 0; border-bottom: 1px dashed #e9ecef; font-size: 22px; line-height: 33px; letter-spacing: .3px; }
.price { letter-spacing: -.8px; }
.total { height: 40px; line-height: 40px; margin-bottom: 36px; text-align: right; font-size: 26px; font-weight: 700; color: #4361ee; letter-spacing: 0; }
.actions { display: flex; gap: 19px; }
.btn { height: 64px; border-radius: 12px; border: 1px solid #4361ee; display: flex; align-items: center; justify-content: center; gap: 11px; font-family: inherit; font-size: 23px; font-weight: 500; letter-spacing: -.3px; }
.btn-primary { flex: 294; background: #4361ee; color: #fff; }
.btn-outline { flex: 296; background: #fff; color: #4361ee; }
.ico-btn { width: 24px; height: 24px; }

.scan-btn { position: absolute; right: 0; bottom: 0; width: 54px; height: 53px; border-radius: 12px 12px 0 12px; background: linear-gradient(135deg, #ff9a5c, #ff8a4c); display: flex; align-items: center; justify-content: center; }
.scan-btn svg { width: 30px; height: 30px; }

.scrollbar { flex: 0 0 21px; background: #2e2e2e; display: flex; flex-direction: column; align-items: center; padding: 6px 0; }
.thumb { width: 13px; height: 24px; border-radius: 7px; background: #9f9f9f; margin-top: 7px; }
.arrow-up, .arrow-down { width: 0; height: 0; border-left: 7px solid transparent; border-right: 7px solid transparent; }
.arrow-up { border-bottom: 11px solid #9f9f9f; }
.arrow-down { border-top: 11px solid #9f9f9f; margin-top: auto; }

/* taskbar */
.taskbar { flex: 0 0 71px; background: linear-gradient(90deg, #1c2028 0%, #1c2028 20%, #12205a 45%, #14204f 62%, #1d2130 75%, #1c2028 100%); border-top: 1px solid #3c4048; display: flex; align-items: center; font-family: "Open Sans", "Noto Sans", sans-serif; color: #fff; position: relative; }
.weather { width: 431.500px; padding-left: 30px; display: flex; align-items: center; position: relative; flex: none; height: 100%; }
.weather-ico { width: 40px; height: 44px; }
.temp { position: absolute; left: 44px; top: 8px; background: #262626; padding: 0 4px; border-radius: 10px; font-size: 17px; line-height: 26px; letter-spacing: -.4px; }
.apps { display: flex; }
.app { width: 66.200px; height: 60px; display: flex; align-items: center; justify-content: center; position: relative; border-radius: 6px; }
.app svg { width: 36px; height: 36px; }
.app svg.over { overflow: visible; }
.dot::after { content: ""; position: absolute; bottom: 1px; left: 28px; width: 10px; height: 5px; border-radius: 3px; background: #8c93a3; }
.app-active { background: rgba(255, 255, 255, .07); border-radius: 8px; }
.app-active::after { content: ""; position: absolute; bottom: 1px; left: 21px; width: 24px; height: 5px; border-radius: 3px; background: #47b7f5; }
.tray { margin-left: auto; display: flex; align-items: center; padding-right: 27px; }
.tray-ico { width: 20px; height: 20px; margin-right: 26px; }
.tray-ico.wide { width: 24px; height: 24px; margin-right: 12px; }
.clock { display: flex; flex-direction: column; align-items: flex-end; font-size: 18px; line-height: 24px; margin-left: 14px; letter-spacing: -.1px; }
```
